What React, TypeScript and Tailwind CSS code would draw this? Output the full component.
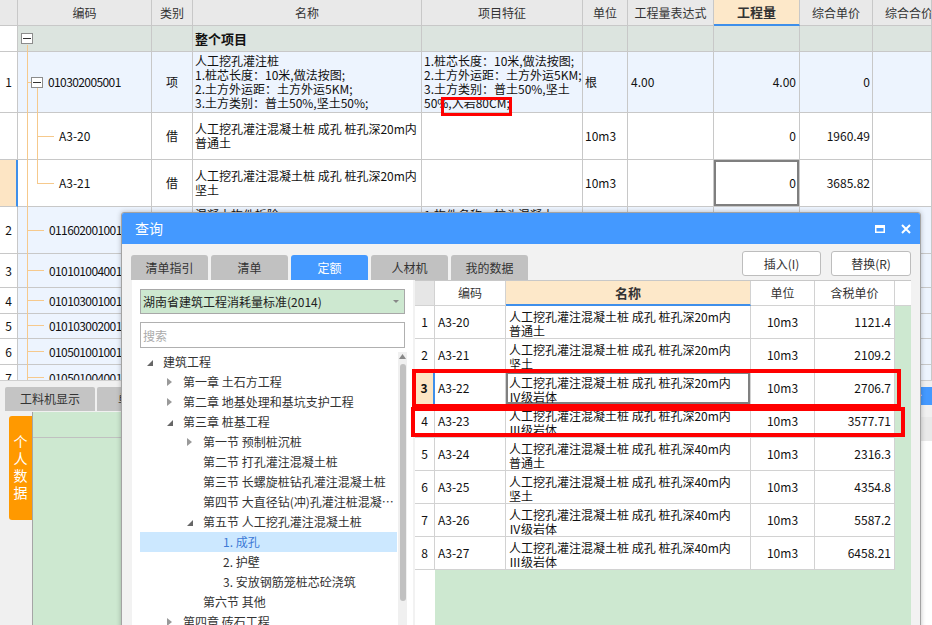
import React from "react";

// background grid (清单 table)
const TOP_COLS = "grid grid-cols-[18px_134px_41px_229px_161px_45px_86px_86px_73px_1fr]";
const tc = "flex items-center overflow-hidden whitespace-nowrap border-r border-b border-[#c8c8c8]";
const BLUE = "bg-[#edf4fe]";
const GREY = "bg-[#dce4df]";

// dialog grid (定额 table)
const Q_COLS = "grid grid-cols-[20px_71px_245px_64px_80px]";
const qc = "flex overflow-hidden whitespace-nowrap border-r border-b border-[#d2d2d2]";

function MinusBox() {
  return (
    <span className="flex h-[11px] w-[12px] shrink-0 items-center justify-center border border-[#8c8c8c] bg-white">
      <span className="h-px w-[8px] bg-[#333]" />
    </span>
  );
}

function Lines({ items }: { items: string[] }) {
  return (
    <div className="leading-[14px]">
      {items.map((t, i) => (
        <div key={i} className="whitespace-nowrap">
          {t}
        </div>
      ))}
    </div>
  );
}

const subRows = [
  { no: "3", code: "010101004001", name: "挖基坑土方", unit: "m3", h: "h-[34px]" },
  { no: "4", code: "010103001001", name: "回填方", unit: "m3", h: "h-[26px]" },
  { no: "5", code: "010103002001", name: "余方弃置", unit: "m3", h: "h-[25px]" },
  { no: "6", code: "010501001001", name: "垫层", unit: "m3", h: "h-[26px]" },
  { no: "7", code: "010501004001", name: "满堂基础", unit: "m3", h: "h-[26px]" },
];

function BackgroundTable() {
  return (
    <div className="relative h-[380px] overflow-hidden">
      {/* header */}
      <div className={`${TOP_COLS} h-[26px] bg-[#e9e9e9] text-[12px] text-[#333]`}>
        <div className={tc} />
        {["编码", "类别", "名称", "项目特征", "单位", "工程量表达式"].map((h) => (
          <div key={h} className={`${tc} justify-center`}>
            {h}
          </div>
        ))}
        <div className={`${tc} justify-center border-b-2 border-b-[#3f8fea] bg-[#fde8c9] text-[13px] font-bold`}>工程量</div>
        <div className={`${tc} justify-center`}>综合单价</div>
        <div className={`${tc} pl-[12px]`}>综合合价</div>
      </div>

      {/* 整个项目 */}
      <div className={`${TOP_COLS} h-[26px]`}>
        <div className={`${tc} bg-white`} />
        <div className={`${tc} ${GREY} pl-[3px]`}>
          <MinusBox />
        </div>
        <div className={`${tc} ${GREY}`} />
        <div className={`${tc} ${GREY} pl-[2px] text-[13px] font-bold`}>整个项目</div>
        {Array.from({ length: 6 }).map((_, i) => (
          <div key={i} className={`${tc} ${GREY}`} />
        ))}
      </div>

      {/* 1 */}
      <div className={`${TOP_COLS} h-[61px]`}>
        <div className={`${tc} justify-center bg-white`}>1</div>
        <div className={`${tc} ${BLUE} pl-[13px]`}>
          <MinusBox />
          <span className="ml-[5px] tracking-[-0.6px]">010302005001</span>
        </div>
        <div className={`${tc} ${BLUE} justify-center`}>项</div>
        <div className={`${tc} ${BLUE} pl-[2px]`}>
          <Lines items={["人工挖孔灌注桩", "1.桩芯长度：10米,做法按图;", "2.土方外运距：土方外运5KM;", "3.土方类别：普土50%,坚土50%;"]} />
        </div>
        <div className={`${tc} ${BLUE} pl-[2px]`}>
          <Lines items={["1.桩芯长度：10米,做法按图;", "2.土方外运距：土方外运5KM;", "3.土方类别：普土50%,坚土", "50%,入岩80CM;"]} />
        </div>
        <div className={`${tc} ${BLUE} pl-[2px]`}>根</div>
        <div className={`${tc} ${BLUE} pl-[3px]`}>4.00</div>
        <div className={`${tc} ${BLUE} justify-end pr-[3px]`}>4.00</div>
        <div className={`${tc} ${BLUE} justify-end pr-[2px]`}>0</div>
        <div className={`${tc} ${BLUE}`} />
      </div>

      {/* A3-20 */}
      <div className={`${TOP_COLS} h-[47px]`}>
        <div className={`${tc} bg-white`} />
        <div className={`${tc} pl-[41px]`}>A3-20</div>
        <div className={`${tc} justify-center`}>借</div>
        <div className={`${tc} pl-[2px]`}>
          <Lines items={["人工挖孔灌注混凝土桩 成孔 桩孔深20m内", "普通土"]} />
        </div>
        <div className={tc} />
        <div className={`${tc} pl-[2px]`}>10m3</div>
        <div className={tc} />
        <div className={`${tc} justify-end pr-[3px]`}>0</div>
        <div className={`${tc} justify-end pr-[2px]`}>1960.49</div>
        <div className={tc} />
      </div>

      {/* A3-21 */}
      <div className={`${TOP_COLS} h-[47px]`}>
        <div className="border-b border-r-2 border-b-[#c8c8c8] border-r-[#3f8fea] bg-[#fde5c4]" />
        <div className={`${tc} pl-[41px]`}>A3-21</div>
        <div className={`${tc} justify-center`}>借</div>
        <div className={`${tc} pl-[2px]`}>
          <Lines items={["人工挖孔灌注混凝土桩 成孔 桩孔深20m内", "坚土"]} />
        </div>
        <div className={tc} />
        <div className={`${tc} pl-[2px]`}>10m3</div>
        <div className={tc} />
        <div className={`${tc} justify-end pr-[3px] shadow-[inset_0_0_0_2px_#7f7f7f]`}>0</div>
        <div className={`${tc} justify-end pr-[2px]`}>3685.82</div>
        <div className={tc} />
      </div>

      {/* 2 */}
      <div className={`${TOP_COLS} h-[47px]`}>
        <div className={`${tc} justify-center bg-white`}>2</div>
        <div className={`${tc} ${BLUE} pl-[31px] tracking-[-0.6px]`}>011602001001</div>
        <div className={`${tc} ${BLUE} justify-center`}>项</div>
        <div className={`${tc} ${BLUE} items-start pl-[2px] pt-px`}>
          <Lines items={["混凝土构件拆除", "1.构件名称：桩头;"]} />
        </div>
        <div className={`${tc} ${BLUE} items-start pl-[2px] pt-px`}>
          <Lines items={["1.构件名称：桩头混凝土;", "2.部位：桩顶;"]} />
        </div>
        <div className={`${tc} ${BLUE} pl-[2px]`}>m3</div>
        <div className={`${tc} ${BLUE}`} />
        <div className={`${tc} ${BLUE} justify-end pr-[3px]`}>0</div>
        <div className={`${tc} ${BLUE} justify-end pr-[2px]`}>0</div>
        <div className={`${tc} ${BLUE}`} />
      </div>

      {subRows.map((r) => (
        <div key={r.no} className={`${TOP_COLS} ${r.h}`}>
          <div className={`${tc} justify-center bg-white`}>{r.no}</div>
          <div className={`${tc} ${BLUE} pl-[31px] tracking-[-0.6px]`}>{r.code}</div>
          <div className={`${tc} ${BLUE} justify-center`}>项</div>
          <div className={`${tc} ${BLUE} pl-[2px]`}>{r.name}</div>
          <div className={`${tc} ${BLUE}`} />
          <div className={`${tc} ${BLUE} pl-[2px]`}>{r.unit}</div>
          <div className={`${tc} ${BLUE}`} />
          <div className={`${tc} ${BLUE} justify-end pr-[3px]`}>0</div>
          <div className={`${tc} ${BLUE} justify-end pr-[2px]`}>0</div>
          <div className={`${tc} ${BLUE}`} />
        </div>
      ))}

      {/* tree guide lines */}
      <svg className="pointer-events-none absolute left-0 top-0" width="60" height="380">
        <g stroke="#f6c98c" strokeWidth="1" shapeRendering="crispEdges">
          <line x1="27.5" y1="45" x2="27.5" y2="380" />
          <line x1="27" y1="82.5" x2="31" y2="82.5" />
          <line x1="37.5" y1="88" x2="37.5" y2="183" />
          <line x1="37" y1="136.5" x2="54" y2="136.5" />
          <line x1="37" y1="183.5" x2="54" y2="183.5" />
          {[230, 270, 300, 325, 351, 377].map((y) => (
            <line key={y} x1="28" y1={y + 0.5} x2="44" y2={y + 0.5} />
          ))}
        </g>
      </svg>
    </div>
  );
}

function BottomPanel() {
  const tabs = ["工料机显示", "单价构成", "标准换算", "换算信息", "特征及内容", "工程量明细", "反查图形工程量", "说明信息"];
  return (
    <div className="flex h-[245px] flex-col border-t border-[#cfcfcf] bg-[#f0f0f0]">
      <div className="flex h-[31px] items-start gap-[2px] pl-[5px] pt-[6px]">
        {tabs.map((t) => (
          <div key={t} className="flex h-[24px] w-[90px] items-center justify-center rounded-t-[2px] bg-[#c4c4c4] text-[12px] text-[#333]">
            {t}
          </div>
        ))}
        <div className="ml-auto flex h-[18px] w-[40px] items-center bg-[#4499ff] pl-[6px] text-[12px] text-white">组价</div>
      </div>
      <div className="flex min-h-0 flex-1">
        <div className="ml-[9px] mt-[4px] flex h-[104px] w-[23px] flex-col items-center rounded-l-[3px] bg-[#ff9900] pt-[17px] text-[14px] leading-[17px] text-white">
          {["个", "人", "数", "据"].map((c) => (
            <span key={c}>{c}</span>
          ))}
        </div>
        <div className="flex w-[848px] flex-col border-l border-[#a5a5a5] bg-[#cde8d0]">
          <div className="h-[26px] border-b border-[#c0c0c0]" />
        </div>
        <div className="flex flex-1 flex-col bg-white">
          <div className="h-[5px] bg-[#f0f0f0]" />
          <div className="flex h-[24px] items-center bg-[#e9e9e9] pl-[4px] text-[12px] text-[#aaa]">说明空</div>
        </div>
      </div>
    </div>
  );
}

type TreeItem = { lv: number; t: string; a?: "open" | "closed"; sel?: boolean };

const tree: TreeItem[] = [
  { lv: 0, t: "建筑工程", a: "open" },
  { lv: 1, t: "第一章 土石方工程", a: "closed" },
  { lv: 1, t: "第二章 地基处理和基坑支护工程", a: "closed" },
  { lv: 1, t: "第三章 桩基工程", a: "open" },
  { lv: 2, t: "第一节 预制桩沉桩", a: "closed" },
  { lv: 2, t: "第二节 打孔灌注混凝土桩" },
  { lv: 2, t: "第三节 长螺旋桩钻孔灌注混凝土桩" },
  { lv: 2, t: "第四节 大直径钻(冲)孔灌注桩混凝土桩" },
  { lv: 2, t: "第五节 人工挖孔灌注混凝土桩", a: "open" },
  { lv: 3, t: "1. 成孔", sel: true },
  { lv: 3, t: "2. 护壁" },
  { lv: 3, t: "3. 安放钢筋笼桩芯砼浇筑" },
  { lv: 2, t: "第六节 其他" },
  { lv: 1, t: "第四章 砖石工程", a: "closed" },
];

const indent = ["pl-[7px]", "pl-[27px]", "pl-[47px]", "pl-[67px]"];

function Arrow({ a }: { a?: "open" | "closed" }) {
  if (a === "open")
    return (
      <svg width="6" height="6" className="mt-[2px]">
        <polygon points="6,0 6,6 0,6" fill="#666" />
      </svg>
    );
  if (a === "closed")
    return (
      <svg width="5" height="8">
        <polygon points="0,0 5,4 0,8" fill="#999" />
      </svg>
    );
  return null;
}

const quota = [
  ["A3-20", "桩孔深20m内", "普通土", "1121.4"],
  ["A3-21", "桩孔深20m内", "坚土", "2109.2"],
  ["A3-22", "桩孔深20m内", "Ⅳ级岩体", "2706.7"],
  ["A3-23", "桩孔深20m内", "Ⅲ级岩体", "3577.71"],
  ["A3-24", "桩孔深40m内", "普通土", "2316.3"],
  ["A3-25", "桩孔深40m内", "坚土", "4354.8"],
  ["A3-26", "桩孔深40m内", "Ⅳ级岩体", "5587.2"],
  ["A3-27", "桩孔深40m内", "Ⅲ级岩体", "6458.21"],
];

function QueryDialog() {
  const tabs = ["清单指引", "清单", "定额", "人材机", "我的数据"];
  return (
    <div className="absolute left-[121px] top-[212px] flex h-[420px] w-[800px] flex-col rounded-t-[3px] border border-[#a3a3a3] bg-[#f2f2f2] shadow-[0_0_5px_rgba(0,0,0,0.25)]">
      <div className="flex h-[31px] items-center rounded-t-[2px] bg-[#4499ff] pl-[13px] pr-[9px] text-[14px] text-white">
        <span>查询</span>
        <div className="ml-auto flex items-center gap-[16px]">
          <svg width="10" height="8">
            <rect x="0.75" y="0.75" width="8.5" height="6.5" fill="none" stroke="#fff" strokeWidth="1.5" />
            <line x1="0" y1="1.5" x2="10" y2="1.5" stroke="#fff" strokeWidth="3" />
          </svg>
          <svg width="10" height="10">
            <path d="M1 1 L9 9 M9 1 L1 9" stroke="#fff" strokeWidth="2" />
          </svg>
        </div>
      </div>

      <div className="flex h-[36px] items-end px-[9px]">
        <div className="flex gap-[3px]">
          {tabs.map((t) => (
            <div
              key={t}
              className={
                t === "定额"
                  ? "flex h-[25px] w-[77px] items-center justify-center rounded-t-[3px] bg-[#4499ff] text-[12px] text-white"
                  : "flex h-[25px] w-[77px] items-center justify-center rounded-t-[3px] bg-[#c1c1c1] text-[12px] text-[#333]"
              }
            >
              {t}
            </div>
          ))}
        </div>
        <div className="mb-[4px] ml-auto flex gap-[10px]">
          <button className="h-[25px] w-[79px] rounded-[3px] border border-[#bdbdbd] bg-white text-[12px] text-[#333]">插入(I)</button>
          <button className="h-[25px] w-[80px] rounded-[3px] border border-[#bdbdbd] bg-white text-[12px] text-[#333]">替换(R)</button>
        </div>
      </div>

      <div className="flex min-h-0 flex-1 gap-[2px] pl-[10px] pr-[9px]">
        {/* left: library tree */}
        <div className="flex w-[281px] flex-col bg-white">
          <div className="mx-[8px] mt-[9px] flex h-[25px] items-center border border-[#a8a8a8] bg-[#cde8d0] pl-[2px] pr-[5px] text-[12px] text-[#222]">
            <span>湖南省建筑工程消耗量标准(2014)</span>
            <svg className="ml-auto" width="6" height="3">
              <polygon points="0,0 6,0 3,3" fill="#888" />
            </svg>
          </div>
          <input
            placeholder="搜索"
            className="mx-[8px] mt-[8px] h-[26px] border border-[#b0b0b0] pl-[2px] text-[12px] outline-none placeholder:text-[#aaa]"
          />
          <div className="mt-[4px] flex min-h-0 flex-1 pl-[8px] pr-[6px]">
            <div className="w-[257px] text-[12px] text-[#333]">
              {tree.map((it) => (
                <div
                  key={it.t}
                  className={`flex h-[20px] items-center ${indent[it.lv]} ${it.sel ? "bg-[#cce8ff] text-[#3d7ad6]" : ""}`}
                >
                  <span className="flex w-[16px] shrink-0 items-center">
                    <Arrow a={it.a} />
                  </span>
                  <span className="min-w-0 truncate pr-[3px]">{it.t}</span>
                </div>
              ))}
            </div>
            <div className="ml-[1px] flex w-[9px] flex-col items-center bg-[#f0f0f0] pt-[2px]">
              <svg width="7" height="5">
                <polygon points="0,5 3.5,0 7,5" fill="#888" />
              </svg>
              <div className="mt-[5px] h-[237px] w-[6px] rounded-full bg-[#c1c1c1]" />
            </div>
          </div>
        </div>

        {/* right: quota table */}
        <div className="flex w-[496px] flex-col border-t border-[#c8c8c8] bg-[#cde8d0]">
          <div className="flex h-[25px] text-[12px] text-[#333]">
            <div className={`${Q_COLS} w-[480px]`}>
              <div className={`${qc} bg-[#e6e6e6]`} />
              <div className={`${qc} items-center justify-center bg-white`}>编码</div>
              <div className={`${qc} items-center justify-center border-b-2 border-b-[#3f8fea] bg-[#fde8c9] text-[13px] font-bold`}>名称</div>
              <div className={`${qc} items-center justify-center bg-white`}>单位</div>
              <div className={`${qc} items-center justify-center bg-white`}>含税单价</div>
            </div>
            <div className="w-[16px] border-b border-[#d2d2d2] bg-white" />
          </div>
          <div className="flex min-h-0 flex-1">
            <div className="flex w-[480px] flex-col">
              {quota.map((q, i) => {
                const sel = i === 2;
                return (
                  <div key={q[0]} className={`${Q_COLS} h-[33px] text-[12px] text-[#111]`}>
                    <div
                      className={
                        sel
                          ? "flex items-center justify-center border-b border-r-2 border-b-[#d2d2d2] border-r-[#3f8fea] bg-[#fde5c4] font-bold"
                          : `${qc} items-center justify-center bg-white`
                      }
                    >
                      {i + 1}
                    </div>
                    <div className={`${qc} items-center bg-white pl-[3px]`}>{q[0]}</div>
                    <div className={`${qc} items-start bg-white pl-[3px] pt-[4px] ${sel ? "shadow-[inset_0_0_0_2px_#808080]" : ""}`}>
                      <Lines items={[`人工挖孔灌注混凝土桩 成孔 ${q[1]}`, q[2]]} />
                    </div>
                    <div className={`${qc} items-center justify-center bg-white`}>10m3</div>
                    <div className={`${qc} items-center justify-end bg-white pr-[3px]`}>{q[3]}</div>
                  </div>
                );
              })}
              <div className="flex flex-1">
                <div className="w-[20px] bg-white" />
              </div>
            </div>
          </div>
        </div>
      </div>
    </div>
  );
}

export default function App() {
  return (
    <div className="relative h-[625px] w-[932px] overflow-hidden bg-white font-['Noto_Sans_CJK_SC',sans-serif] text-[12px] text-[#111]">
      <BackgroundTable />
      <BottomPanel />
      <QueryDialog />

      {/* red annotation boxes */}
      <div className="absolute left-[441px] top-[97px] h-[19px] w-[71px] border-[3px] border-[#ff0000]" />
      <div className="absolute left-[412px] top-[369px] h-[39px] w-[489px] border-4 border-[#ff0000]" />
      <div className="absolute left-[411px] top-[407px] h-[30px] w-[494px] border-4 border-[#ff0000]" />
    </div>
  );
}
